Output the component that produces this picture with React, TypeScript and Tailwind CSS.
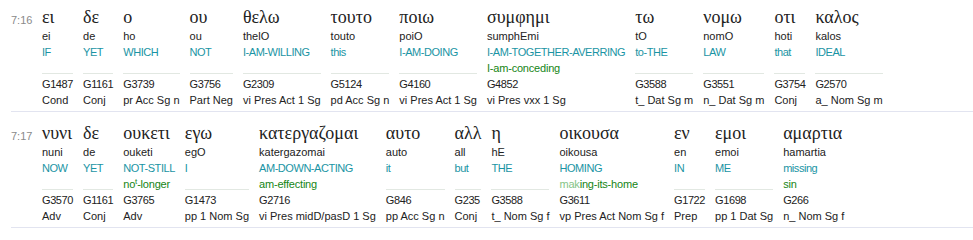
import { ReactNode } from "react";

interface Word {
  greek: string;
  translit: string;
  gloss: string;
  alt?: ReactNode;
  strong: string;
  morph: string;
}

interface Verse {
  ref: string;
  words: Word[];
}

const verses: Verse[] = [
  {
    ref: "7:16",
    words: [
      { greek: "ει", translit: "ei", gloss: "IF", strong: "G1487", morph: "Cond" },
      { greek: "δε", translit: "de", gloss: "YET", strong: "G1161", morph: "Conj" },
      { greek: "ο", translit: "ho", gloss: "WHICH", strong: "G3739", morph: "pr Acc Sg n" },
      { greek: "ου", translit: "ou", gloss: "NOT", strong: "G3756", morph: "Part Neg" },
      { greek: "θελω", translit: "thelO", gloss: "I-AM-WILLING", strong: "G2309", morph: "vi Pres Act 1 Sg" },
      { greek: "τουτο", translit: "touto", gloss: "this", strong: "G5124", morph: "pd Acc Sg n" },
      { greek: "ποιω", translit: "poiO", gloss: "I-AM-DOING", strong: "G4160", morph: "vi Pres Act 1 Sg" },
      {
        greek: "συμφημι",
        translit: "sumphEmi",
        gloss: "I-AM-TOGETHER-AVERRING",
        alt: "I-am-conceding",
        strong: "G4852",
        morph: "vi Pres vxx 1 Sg",
      },
      { greek: "τω", translit: "tO", gloss: "to-THE", strong: "G3588", morph: "t_ Dat Sg m" },
      { greek: "νομω", translit: "nomO", gloss: "LAW", strong: "G3551", morph: "n_ Dat Sg m" },
      { greek: "οτι", translit: "hoti", gloss: "that", strong: "G3754", morph: "Conj" },
      { greek: "καλος", translit: "kalos", gloss: "IDEAL", strong: "G2570", morph: "a_ Nom Sg m" },
    ],
  },
  {
    ref: "7:17",
    words: [
      { greek: "νυνι", translit: "nuni", gloss: "NOW", strong: "G3570", morph: "Adv" },
      { greek: "δε", translit: "de", gloss: "YET", strong: "G1161", morph: "Conj" },
      {
        greek: "ουκετι",
        translit: "ouketi",
        gloss: "NOT-STILL",
        alt: (
          <>
            no<sup className="text-[8px]">t</sup>-longer
          </>
        ),
        strong: "G3765",
        morph: "Adv",
      },
      { greek: "εγω", translit: "egO", gloss: "I", strong: "G1473", morph: "pp 1 Nom Sg" },
      {
        greek: "κατεργαζομαι",
        translit: "katergazomai",
        gloss: "AM-DOWN-ACTING",
        alt: "am-effecting",
        strong: "G2716",
        morph: "vi Pres midD/pasD 1 Sg",
      },
      { greek: "αυτο", translit: "auto", gloss: "it", strong: "G846", morph: "pp Acc Sg n" },
      { greek: "αλλ", translit: "all", gloss: "but", strong: "G235", morph: "Conj" },
      { greek: "η", translit: "hE", gloss: "THE", strong: "G3588", morph: "t_ Nom Sg f" },
      {
        greek: "οικουσα",
        translit: "oikousa",
        gloss: "HOMING",
        alt: (
          <>
            <span className="text-[#86c486]">mak</span>ing-its-home
          </>
        ),
        strong: "G3611",
        morph: "vp Pres Act Nom Sg f",
      },
      { greek: "εν", translit: "en", gloss: "IN", strong: "G1722", morph: "Prep" },
      { greek: "εμοι", translit: "emoi", gloss: "ME", strong: "G1698", morph: "pp 1 Dat Sg" },
      { greek: "αμαρτια", translit: "hamartia", gloss: "missing", alt: "sin", strong: "G266", morph: "n_ Nom Sg f" },
    ],
  },
];

const WordCell = ({ word }: { word: Word }) => (
  <div className="flex flex-col whitespace-nowrap">
    <div className="h-[22px] leading-[22px] text-[18px] text-[#222] font-['Liberation_Serif',serif]">
      {word.greek}
    </div>
    <div className="h-4 leading-4 text-[#222]">{word.translit}</div>
    <div className="h-4 leading-4 tracking-[-0.45px] text-[#1a94a4]">{word.gloss}</div>
    {word.alt ? (
      <div className="h-4 leading-4 tracking-[-0.2px] text-[#158515]">{word.alt}</div>
    ) : (
      <div className="h-4 pt-[13px]">
        <div className="border-t border-[#e2e8e2]" />
      </div>
    )}
    <div className="h-4 leading-4 tracking-[-0.4px] text-[#222]">{word.strong}</div>
    <div className="h-4 leading-4 text-[#222]">{word.morph}</div>
  </div>
);

export default function App() {
  return (
    <div className="w-[973px] h-[240px] overflow-hidden bg-white text-[11px] font-['Liberation_Sans',Arial,sans-serif]">
      <div className="-mt-1">
        {verses.map((verse) => (
          <div key={verse.ref} className="ml-[11px] pt-[10px] pb-[3px] border-b border-[#e2e4f0]">
            <div className="flex items-start gap-[10px]">
              <div className="w-[21px] mt-[6px] leading-4 text-[#8a8a8a]">{verse.ref}</div>
              {verse.words.map((word, i) => (
                <WordCell key={i} word={word} />
              ))}
            </div>
          </div>
        ))}
      </div>
    </div>
  );
}
